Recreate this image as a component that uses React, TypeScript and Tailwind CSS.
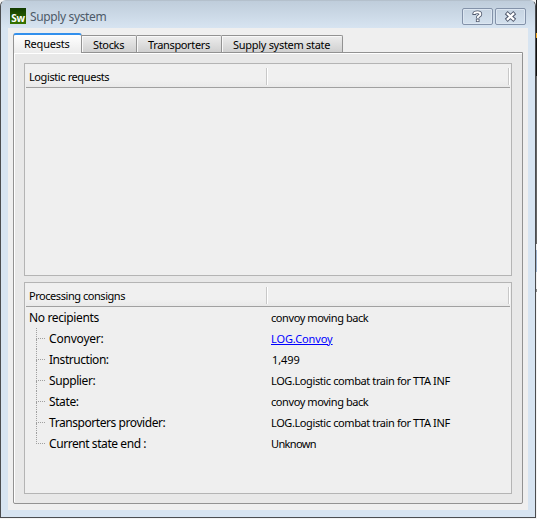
import React from "react";

const tabBase =
  "mt-0.5 flex h-[17px] items-center whitespace-nowrap border-t border-r border-[#929292] bg-gradient-to-b from-[#ededed] to-[#d0d0d0] rounded-tr-[2px] pt-[2px] pl-[11px] shadow-[inset_1px_1px_0_#f8f8f8]";

function Panel({ title, titleClass, children, className }: { title: string; titleClass: string; children?: React.ReactNode; className: string }) {
  return (
    <section className={`border border-[#b4b4b4] bg-[#efefef] p-px ${className}`}>
      <header className="flex h-[23px] border-b border-[#a0a0a0] bg-gradient-to-b from-[#f0f0f0] from-70% to-[#e9e9e9]">
        <div className="flex w-[240px] items-center pt-px pl-[3px]">
          <span className={titleClass}>{title}</span>
        </div>
        <div className="mt-[3px] h-[17px] w-[243px] border-x border-[#c8c8c8] shadow-[inset_1px_0_0_#fff,1px_0_0_#fff]" />
      </header>
      {children}
    </section>
  );
}

const rows = [
  { label: "Convoyer:", lc: "tracking-[-0.2px]", value: "LOG.Convoy", vc: "tracking-[-0.1px] text-[#0000ff] underline underline-offset-1" },
  { label: "Instruction:", lc: "tracking-[-0.45px]", value: "1,499", vc: "tracking-[-0.1px] pl-px" },
  { label: "Supplier:", lc: "tracking-[-0.4px]", value: "LOG.Logistic combat train for TTA INF", vc: "tracking-[-0.4px]" },
  { label: "State:", lc: "tracking-[-0.4px]", value: "convoy moving back", vc: "tracking-[-0.42px]" },
  { label: "Transporters provider:", lc: "tracking-[-0.43px]", value: "LOG.Logistic combat train for TTA INF", vc: "tracking-[-0.4px]" },
  { label: "Current state end :", lc: "tracking-[-0.43px]", value: "Unknown", vc: "tracking-[-0.65px]" },
];

export default function App() {
  return (
    <div className="flex h-[519px] w-[537px] bg-[#f4f4f4] font-['Noto_Sans',sans-serif] text-[11px] leading-[16px] text-black">
      <main className="flex h-[518px] w-[536px] shrink-0 flex-col rounded-t-[6px] border border-[#4b4d50] border-t-[#b4c0cc] bg-[#d7e4f1]">
        <div className="flex h-[27px] shrink-0 rounded-t-[5px] bg-gradient-to-b from-[#bfcddb] to-[#d7e4f1] pl-[9px]">
          <div className="mt-[7px] flex h-4 w-4 items-end justify-center bg-gradient-to-b from-[#123b00] to-[#377500] text-[10px] leading-[12px] font-bold tracking-[-0.3px] text-white">
            Sw
          </div>
          <h1 className="mt-[7px] ml-1 w-[432px] text-[12px] leading-[17px] tracking-[-0.36px] text-[#4d5a69]">Supply system</h1>
          <div className="mt-[7px] flex gap-0.5">
            {["help", "close"].map((k) => (
              <button key={k} className="flex h-[17px] w-[31px] items-center justify-center rounded-[2px] border border-[#8392a9] shadow-[inset_0_0_0_1px_#dce6f1]">
                <svg width="13" height="13" viewBox="0 0 13 13" fill="none">
                  {k === "help" ? (
                    <>
                      <path d="M3.2 4.9V3.8Q3.4 2.3 6.5 2.3Q9.4 2.3 9.4 4.2Q9.4 5.3 7.8 6.1Q6.7 6.7 6.7 8.1M6.7 8.6V12" stroke="#50596d" strokeWidth="3.6" />
                      <path d="M3.2 4.1V3.8Q3.4 2.3 6.5 2.3Q9.4 2.3 9.4 4.2Q9.4 5.3 7.8 6.1Q6.7 6.7 6.7 7.9M6.7 9.4V11.2" stroke="#fff" strokeWidth="1.9" />
                    </>
                  ) : (
                    <>
                      <path d="M2.2 2.6L10.8 10.4M10.8 2.6L2.2 10.4" stroke="#50596d" strokeWidth="4.2" />
                      <path d="M2.9 3.2L10.1 9.8M10.1 3.2L2.9 9.8" stroke="#fff" strokeWidth="2.3" />
                    </>
                  )}
                </svg>
              </button>
            ))}
          </div>
        </div>
        <div className="mx-[7px] flex h-[482px] flex-col bg-[#efefef] px-[5px] pt-[5px]">
          <nav className="z-10 -mb-px flex h-5">
            <div className="flex h-5 w-[69px] items-center rounded-t-[3px] border-x border-t-2 border-x-[#929292] border-t-[#3290ed] bg-gradient-to-b from-white to-[#ebebeb] pl-[10px] tracking-[-0.22px]">
              Requests
            </div>
            <div className={`${tabBase} w-[55px] tracking-[-0.33px]`}>Stocks</div>
            <div className={`${tabBase} w-[85px] tracking-[-0.35px]`}>Transporters</div>
            <div className={`${tabBase} w-[121px] tracking-[-0.29px]`}>Supply system state</div>
          </nav>
          <div className="flex h-[452px] w-[510px] flex-col gap-[6px] rounded-b-[2px] border border-[#929292] bg-[#e8e8e8] px-[10px] pt-[10px] shadow-[inset_1px_1px_0_#fff]">
            <Panel title="Logistic requests" titleClass="tracking-[-0.4px]" className="h-[213px]" />
            <Panel title="Processing consigns" titleClass="tracking-[-0.45px]" className="h-[212px]">
              <div className="flex h-[21px] items-center pl-[3px] text-[12px]">
                <span className="w-[242px] tracking-[-0.36px]">No recipients</span>
                <span className="text-[11px] tracking-[-0.42px]">convoy moving back</span>
              </div>
              {rows.map((r, i) => (
                <div key={r.label} className="flex h-[21px] items-center pl-[10px]">
                  <div className="mr-1 flex h-[21px] w-[9px] flex-col">
                    <div className="h-[11px] border-b border-l border-dotted border-[#a0a0a0]" />
                    {i < 5 && <div className="h-[10px] border-l border-dotted border-[#a0a0a0]" />}
                  </div>
                  <span className={`w-[222px] text-[12px] ${r.lc}`}>{r.label}</span>
                  <span className={r.vc}>{r.value}</span>
                </div>
              ))}
            </Panel>
          </div>
        </div>
      </main>
      <div className="flex w-px flex-col">
        <div className="h-[33px] bg-[#222]" />
        <div className="h-[5px] bg-[#f0a820]" />
        <div className="h-[38px] bg-[#111]" />
        <div className="h-[168px] bg-[#666]" />
        <div className="h-[6px] bg-[#f0f0f0]" />
        <div className="h-[22px] bg-[#9fb6d2]" />
        <div className="h-[17px] bg-[#f0f0f0]" />
        <div className="h-[3px] bg-[#888]" />
      </div>
    </div>
  );
}
